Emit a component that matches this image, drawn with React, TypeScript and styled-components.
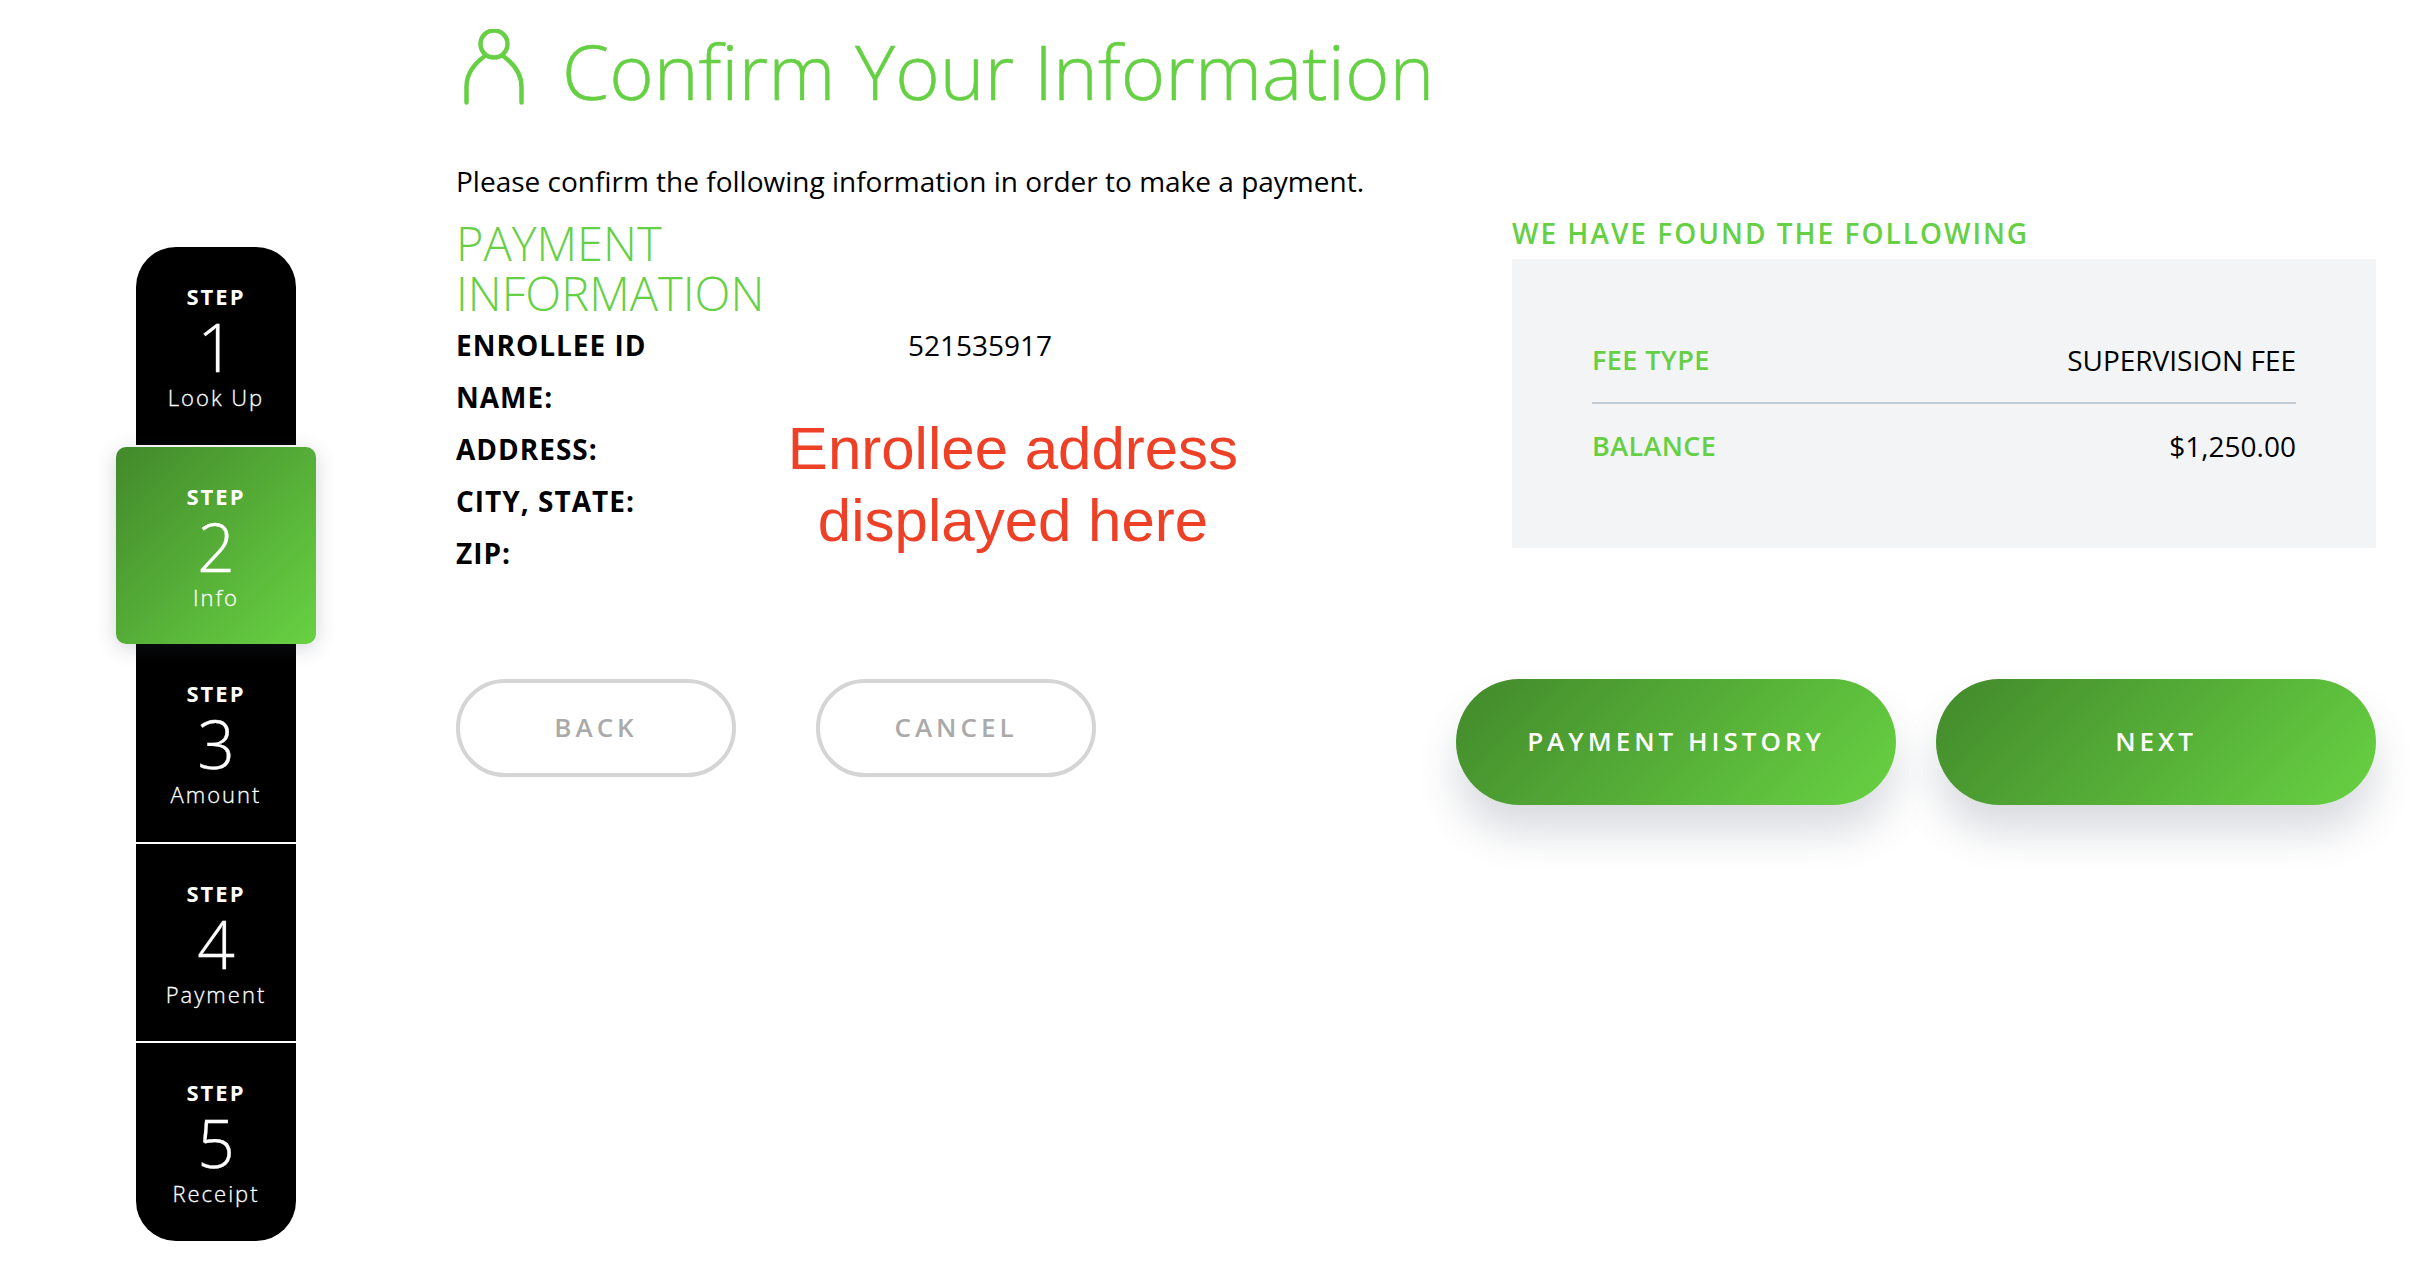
import styled, { createGlobalStyle } from "styled-components";

const GlobalStyle = createGlobalStyle`
  html, body {
    margin: 0;
    padding: 0;
    background: #fff;
  }
  * {
    box-sizing: border-box;
  }
`;

const GREEN = "#66d044";
const GRADIENT = "linear-gradient(135deg, #42892b 0%, #68d243 100%)";

const Page = styled.div`
  width: 2418px;
  height: 1272px;
  overflow: hidden;
  display: flex;
  padding: 0 42px 0 136px;
  font-family: "Open Sans", "Liberation Sans", sans-serif;
  color: #000;
`;

const StepRail = styled.nav`
  flex: none;
  width: 160px;
  height: 994px;
  margin-top: 247px;
  display: flex;
  flex-direction: column;
  gap: 2px;
`;

const Step = styled.div<{ $active?: boolean }>`
  flex: 1;
  display: flex;
  flex-direction: column;
  align-items: center;
  padding-top: 34px;
  color: #fff;
  background: #000;
  &:first-child {
    border-radius: 40px 40px 0 0;
  }
  &:last-child {
    border-radius: 0 0 40px 40px;
  }
  ${(p) =>
    p.$active &&
    `
    margin: 0 -20px -2px;
    position: relative;
    background: ${GRADIENT};
    border-radius: 10px;
    box-shadow: 0 4px 20px rgba(60, 70, 90, 0.22);
  `}
`;

const StepWord = styled.div`
  font-size: 22px;
  line-height: 30px;
  font-weight: 700;
  letter-spacing: 2px;
`;

const StepNumber = styled.div`
  font-size: 66px;
  line-height: 70px;
  font-weight: 300;
  -webkit-text-stroke: 0.3px #fff;
`;

const StepName = styled.div`
  font-size: 22px;
  line-height: 32px;
  font-weight: 300;
  letter-spacing: 2px;
  -webkit-text-stroke: 0.3px #fff;
`;

const Main = styled.main`
  flex: 1;
  min-width: 0;
  margin-left: 160px;
  display: flex;
  flex-direction: column;
  position: relative;
`;

const Header = styled.header`
  height: 160px;
  padding: 29px 0 0 8px;
  display: flex;
  align-items: flex-start;
  gap: 38px;
`;

const Title = styled.h1`
  margin: -16px 0 0;
  font-size: 76px;
  line-height: 116px;
  font-weight: 300;
  color: ${GREEN};
  -webkit-text-stroke: 0.5px ${GREEN};
`;

const Body = styled.div`
  display: grid;
  grid-template-columns: 1056px 1fr;
`;

const Intro = styled.p`
  margin: 0 0 16px;
  font-size: 28px;
  line-height: 42px;
`;

const SectionTitle = styled.h2`
  margin: 0 0 1px;
  width: 360px;
  font-size: 47px;
  line-height: 50px;
  font-weight: 300;
  color: ${GREEN};
`;

const InfoRow = styled.div`
  display: grid;
  grid-template-columns: 452px 1fr;
  height: 52px;
  align-items: center;
  font-size: 28px;
`;

const InfoLabel = styled.span`
  font-weight: 700;
  letter-spacing: 1px;
`;

const Annotation = styled.div`
  position: absolute;
  left: 307px;
  top: 413px;
  width: 500px;
  text-align: center;
  font-family: "Liberation Sans", Arial, sans-serif;
  font-size: 60px;
  line-height: 72px;
  color: #ee4027;
`;

const Summary = styled.section`
  padding-top: 53px;
`;

const SummaryTitle = styled.h3`
  margin: 0 0 6px;
  font-size: 28px;
  line-height: 40px;
  font-weight: 600;
  letter-spacing: 2px;
  color: ${GREEN};
`;

const SummaryPanel = styled.div`
  height: 289px;
  padding: 58px 80px 0;
  background: #f3f4f6;
`;

const SummaryRow = styled.div`
  height: 85px;
  display: flex;
  align-items: center;
  justify-content: space-between;
  font-size: 28px;
  & + & {
    border-top: 2px solid #c3ccd3;
  }
`;

const SummaryLabel = styled.span`
  font-size: 27px;
  font-weight: 600;
  letter-spacing: 0.4px;
  color: ${GREEN};
`;

const Actions = styled.div`
  margin-top: 100px;
  display: flex;
  align-items: flex-start;
`;

const ButtonGroup = styled.div<{ $gap: number; $right?: boolean }>`
  display: flex;
  gap: ${(p) => p.$gap}px;
  margin-left: ${(p) => (p.$right ? "auto" : "0")};
`;

const OutlineButton = styled.button`
  width: 280px;
  height: 98px;
  padding: 0 0 2px;
  border: 4px solid #d5d5d5;
  border-radius: 49px;
  background: #fff;
  font-family: inherit;
  font-size: 26px;
  font-weight: 600;
  letter-spacing: 4px;
  color: #aaa;
`;

const SolidButton = styled.button`
  width: 440px;
  height: 126px;
  padding: 0 0 2px;
  border: 0;
  border-radius: 63px;
  background: ${GRADIENT};
  box-shadow: 0 28px 40px rgba(70, 80, 100, 0.2);
  font-family: inherit;
  font-size: 26px;
  font-weight: 600;
  letter-spacing: 4px;
  color: #fff;
`;

const steps = [
  { n: 1, name: "Look Up" },
  { n: 2, name: "Info", active: true },
  { n: 3, name: "Amount" },
  { n: 4, name: "Payment" },
  { n: 5, name: "Receipt" },
];

const infoRows = [
  { label: "ENROLLEE ID", value: "521535917" },
  { label: "NAME:" },
  { label: "ADDRESS:" },
  { label: "CITY, STATE:" },
  { label: "ZIP:" },
];

function PersonIcon() {
  return (
    <svg width="60" height="76" viewBox="0 0 60 76" fill="none" stroke={GREEN} strokeWidth="4.5" strokeLinecap="round">
      <circle cx="30" cy="15" r="13.5" />
      <path d="M2.5 73.5V58C2.5 43 11 34 21 27" />
      <path d="M57.5 73.5V58C57.5 43 49 34 39 27" />
    </svg>
  );
}

function App() {
  return (
    <Page>
      <GlobalStyle />
      <StepRail>
        {steps.map((s) => (
          <Step key={s.n} $active={s.active}>
            <StepWord>STEP</StepWord>
            <StepNumber>{s.n}</StepNumber>
            <StepName>{s.name}</StepName>
          </Step>
        ))}
      </StepRail>
      <Main>
        <Header>
          <PersonIcon />
          <Title>Confirm Your Information</Title>
        </Header>
        <Body>
          <div>
            <Intro>Please confirm the following information in order to make a payment.</Intro>
            <SectionTitle>PAYMENT INFORMATION</SectionTitle>
            {infoRows.map((r) => (
              <InfoRow key={r.label}>
                <InfoLabel>{r.label}</InfoLabel>
                <span>{r.value}</span>
              </InfoRow>
            ))}
          </div>
          <Summary>
            <SummaryTitle>WE HAVE FOUND THE FOLLOWING</SummaryTitle>
            <SummaryPanel>
              <SummaryRow>
                <SummaryLabel>FEE TYPE</SummaryLabel>
                <span>SUPERVISION FEE</span>
              </SummaryRow>
              <SummaryRow>
                <SummaryLabel>BALANCE</SummaryLabel>
                <span>$1,250.00</span>
              </SummaryRow>
            </SummaryPanel>
          </Summary>
        </Body>
        <Annotation>
          Enrollee address
          <br />
          displayed here
        </Annotation>
        <Actions>
          <ButtonGroup $gap={80}>
            <OutlineButton>BACK</OutlineButton>
            <OutlineButton>CANCEL</OutlineButton>
          </ButtonGroup>
          <ButtonGroup $gap={40} $right>
            <SolidButton>PAYMENT HISTORY</SolidButton>
            <SolidButton>NEXT</SolidButton>
          </ButtonGroup>
        </Actions>
      </Main>
    </Page>
  );
}

export default App;
